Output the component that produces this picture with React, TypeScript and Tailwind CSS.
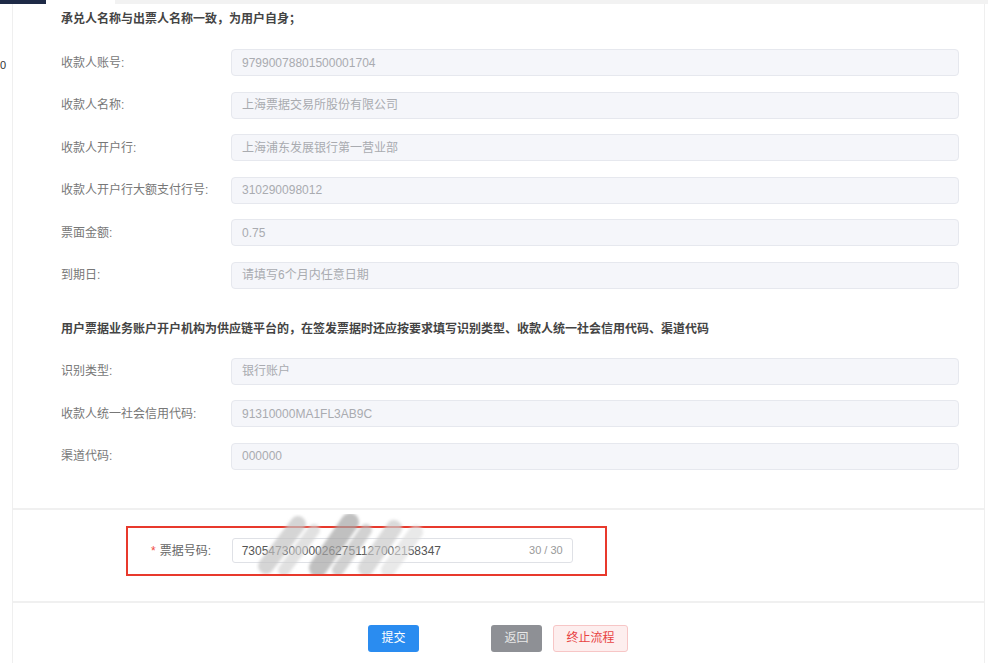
import React from "react";

const font = "font-['Liberation_Sans','Noto_Sans_CJK_SC',sans-serif]";

function Row({ label, value }: { label: string; value: string }) {
  return (
    <div className="flex items-center h-[27px]">
      <div className="w-[170px] shrink-0 text-[12px] text-[#777]">{label}</div>
      <div className="flex-1 h-[27px] flex items-center px-[10px] bg-[#f5f6fa] border border-[#e6e8ee] rounded-[4px] text-[12px] text-[#a9abb0]">
        {value}
      </div>
    </div>
  );
}

export default function App() {
  return (
    <div className={`w-[988px] h-[663px] overflow-hidden bg-white relative ${font}`}>
      {/* top strip */}
      <div className="flex h-[4px]">
        <div className="w-[46px] bg-[#1e2a46]" />
        <div className="w-[69px] bg-white" />
        <div className="flex-1 bg-[#f2f2f2]" />
      </div>
      <div className="flex h-[659px]">
        {/* left gutter */}
        <div className="w-[12px] shrink-0 relative">
          <div className="mt-[53px] text-[11px] text-[#333] leading-[16px]">0</div>
        </div>
        {/* panel */}
        <div className="flex-1 mr-[3px] border-l border-r border-[#efefef] flex flex-col">
          {/* section 1 */}
          <div className="pl-[48px] pr-[25px] pt-[6px] pb-[38px]">
            <div className="text-[12px] leading-[18px] font-semibold text-[#444]">承兑人名称与出票人名称一致，为用户自身；</div>
            <div className="mt-[21px] flex flex-col gap-[15.5px]">
              <Row label="收款人账号:" value="97990078801500001704" />
              <Row label="收款人名称:" value="上海票据交易所股份有限公司" />
              <Row label="收款人开户行:" value="上海浦东发展银行第一营业部" />
              <Row label="收款人开户行大额支付行号:" value="310290098012" />
              <Row label="票面金额:" value="0.75" />
              <Row label="到期日:" value="请填写6个月内任意日期" />
            </div>
            <div className="mt-[31px] text-[12px] leading-[18px] font-semibold text-[#444]">
              用户票据业务账户开户机构为供应链平台的，在签发票据时还应按要求填写识别类型、收款人统一社会信用代码、渠道代码
            </div>
            <div className="mt-[20px] flex flex-col gap-[15.5px]">
              <Row label="识别类型:" value="银行账户" />
              <Row label="收款人统一社会信用代码:" value="91310000MA1FL3AB9C" />
              <Row label="渠道代码:" value="000000" />
            </div>
          </div>
          <div className="h-[2px] bg-[#f0f0f0]" />
          {/* section 2 */}
          <div className="h-[91px] pt-[16px] pl-[113px]">
            <div className="relative w-[481px] h-[50px] border-2 border-[#e8392c] flex items-center pl-[23px]">
              <span className="text-[#f04a3e] text-[12px] mr-[4px]">*</span>
              <span className="text-[12px] text-[#666] w-[72px]">票据号码:</span>
              <div className="w-[341px] h-[25px] border border-[#dfe1e6] rounded-[3px] flex items-center px-[9px] text-[12px] text-[#555]">
                <span className="flex-1">730547300000262751127002158347</span>
                <span className="text-[11px] text-[#999]">30 / 30</span>
              </div>
              <svg className="absolute left-[128px] top-[-14px]" width="190" height="60" viewBox="0 0 190 60">
                <defs>
                  <filter id="bl" x="-20%" y="-20%" width="140%" height="140%">
                    <feGaussianBlur stdDeviation="1.6" />
                  </filter>
                </defs>
                <g filter="url(#bl)" strokeLinecap="round">
                  <path d="M10 52 L42 10" stroke="#c4c4c4" strokeWidth="16" opacity="0.7" />
                  <path d="M28 56 L58 16" stroke="#d2d2d2" strokeWidth="12" opacity="0.65" />
                  <path d="M62 54 L94 8" stroke="#a6a6a6" strokeWidth="18" opacity="0.7" />
                  <path d="M82 56 L110 16" stroke="#bbbbbb" strokeWidth="12" opacity="0.65" />
                  <path d="M110 54 L138 14" stroke="#cacaca" strokeWidth="16" opacity="0.7" />
                  <path d="M132 56 L160 18" stroke="#dddddd" strokeWidth="14" opacity="0.65" />
                </g>
              </svg>
            </div>
          </div>
          <div className="h-[2px] bg-[#f0f0f0]" />
          {/* section 3 */}
          <div className="flex-1 pt-[22px] pl-[355px] flex items-start">
            <button className="w-[51px] h-[27px] rounded-[3px] bg-[#2a8cf0] text-white text-[12px]">提交</button>
            <button className="ml-[72px] w-[51px] h-[27px] rounded-[3px] bg-[#8e9095] text-[#e8e8e8] text-[12px]">返回</button>
            <button className="ml-[11px] w-[75px] h-[27px] rounded-[3px] bg-[#fdeeee] border border-[#f7c6c6] text-[#e84343] text-[12px]">终止流程</button>
          </div>
        </div>
      </div>
    </div>
  );
}
